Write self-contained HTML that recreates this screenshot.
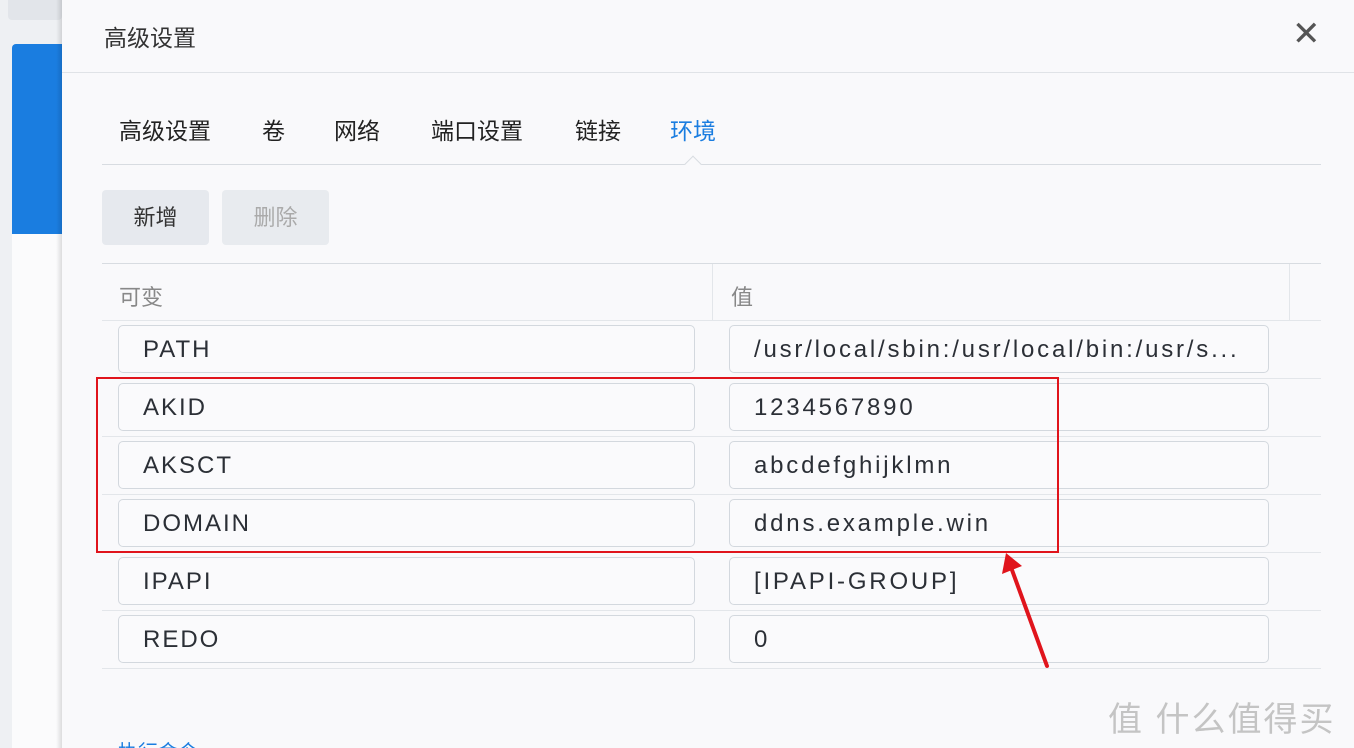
<!DOCTYPE html><html><head><meta charset="utf-8"><style>
html,body{margin:0;width:1354px;height:748px;overflow:hidden}
body{background:#f7f7f9;font-family:"Liberation Sans","Noto Sans CJK SC",sans-serif;position:relative}
.a{position:absolute;white-space:nowrap}
.inp{position:absolute;height:48px;border:1px solid #d3d8de;border-radius:5px;background:#fafafc;font-size:24px;color:#2b2f36;line-height:48px;padding-left:24px;box-sizing:border-box;letter-spacing:2px;white-space:nowrap;overflow:hidden}
.v{letter-spacing:2.8px}
.ln{position:absolute;left:102px;width:1219px;height:1px;background:#e3e6ea}
.tab{position:absolute;top:112px;font-size:23px;color:#222;white-space:nowrap}
</style></head><body>
<div class="a" style="left:0;top:0;width:62px;height:748px;background:#eef0f3"></div>
<div class="a" style="left:8px;top:0;width:54px;height:20px;background:#e2e5ea;border-radius:0 0 4px 4px"></div>
<div class="a" style="left:12px;top:44px;width:50px;height:190px;background:#1a7de0;border-radius:4px 0 0 0"></div>
<div class="a" style="left:12px;top:234px;width:50px;height:514px;background:#fbfbfc"></div>
<div class="a" style="left:56px;top:0;width:6px;height:748px;background:linear-gradient(90deg,rgba(0,0,0,0),rgba(0,0,0,0.12))"></div>
<div class="a" style="left:62px;top:0;width:1292px;height:748px;background:#f9f9fb"></div>
<div class="a" style="left:104px;top:19px;font-size:23px;color:#333">高级设置</div>
<div class="a" style="left:1292px;top:14px;font-size:34px;color:#555;font-weight:300">✕</div>
<div class="a" style="left:62px;top:72px;width:1292px;height:1px;background:#e0e3e7"></div>
<div class="tab" style="left:119px">高级设置</div>
<div class="tab" style="left:262px">卷</div>
<div class="tab" style="left:334px">网络</div>
<div class="tab" style="left:431px">端口设置</div>
<div class="tab" style="left:575px">链接</div>
<div class="tab" style="left:670px;color:#1a7de0">环境</div>
<div class="ln" style="top:164px;background:#d8dce1"></div>
<div class="a" style="left:687px;top:158px;width:11px;height:11px;background:#f9f9fb;border-left:1px solid #d8dce1;border-top:1px solid #d8dce1;transform:rotate(45deg)"></div>
<div class="a" style="left:102px;top:190px;width:107px;height:55px;background:#e6e9ee;border-radius:4px;font-size:22px;color:#333;text-align:center;line-height:55px">新增</div>
<div class="a" style="left:222px;top:190px;width:107px;height:55px;background:#e8ebef;border-radius:4px;font-size:22px;color:#aaa;text-align:center;line-height:55px">删除</div>
<div class="ln" style="top:263px;background:#d8dce1"></div>
<div class="a" style="left:119px;top:280px;font-size:22px;color:#888">可变</div>
<div class="a" style="left:731px;top:280px;font-size:22px;color:#888">值</div>
<div class="a" style="left:712px;top:264px;width:1px;height:56px;background:#e3e6ea"></div>
<div class="a" style="left:1289px;top:264px;width:1px;height:56px;background:#e3e6ea"></div>
<div class="ln" style="top:320px"></div>
<div class="ln" style="top:378px"></div>
<div class="ln" style="top:436px"></div>
<div class="ln" style="top:494px"></div>
<div class="ln" style="top:552px"></div>
<div class="ln" style="top:610px"></div>
<div class="ln" style="top:668px"></div>
<div class="inp" style="left:118px;top:325px;width:577px">PATH</div>
<div class="inp v" style="left:729px;top:325px;width:540px">/usr/local/sbin:/usr/local/bin:/usr/s...</div>
<div class="inp" style="left:118px;top:383px;width:577px">AKID</div>
<div class="inp v" style="left:729px;top:383px;width:540px">1234567890</div>
<div class="inp" style="left:118px;top:441px;width:577px">AKSCT</div>
<div class="inp v" style="left:729px;top:441px;width:540px">abcdefghijklmn</div>
<div class="inp" style="left:118px;top:499px;width:577px">DOMAIN</div>
<div class="inp v" style="left:729px;top:499px;width:540px">ddns.example.win</div>
<div class="inp" style="left:118px;top:557px;width:577px">IPAPI</div>
<div class="inp v" style="left:729px;top:557px;width:540px">[IPAPI-GROUP]</div>
<div class="inp" style="left:118px;top:615px;width:577px">REDO</div>
<div class="inp v" style="left:729px;top:615px;width:540px">0</div>
<div class="a" style="left:96px;top:377px;width:959px;height:172px;border:2.5px solid #e0141c"></div>
<svg class="a" style="left:0;top:0" width="1354" height="748"><line x1="1047" y1="666" x2="1012" y2="570" stroke="#e0141c" stroke-width="4" stroke-linecap="round"/><path d="M1006 553 L1002 574 L1022 566 Z" fill="#e0141c"/></svg>
<div class="a" style="left:1108px;top:692px;font-size:34px;color:#c4c4c4;letter-spacing:2px">值 什么值得买</div>
<div class="a" style="left:118px;top:736px;font-size:20px;color:#1a7de0">执行命令</div>
</body></html>
